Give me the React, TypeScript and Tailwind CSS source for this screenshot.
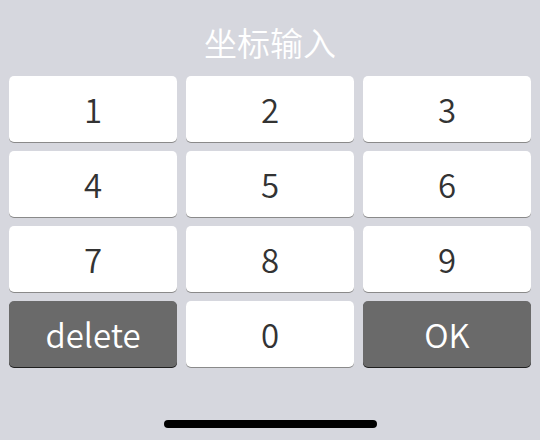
import React from 'react';

const keys = ['1', '2', '3', '4', '5', '6', '7', '8', '9', 'delete', '0', 'OK'];

const App: React.FC = () => {
  return (
    <div
      className="w-[540px] h-[440px] bg-[#d6d7de] flex flex-col items-center"
      style={{ fontFamily: '"Noto Sans CJK SC", "Noto Sans", sans-serif' }}
    >
      {/* Title */}
      <div className="h-[76px] pt-[22px] text-[33px] leading-[40px] font-[350] text-white">坐标输入</div>

      {/* Keypad */}
      <div className="grid grid-cols-3 gap-[9px] w-[522px]">
        {keys.map((k) => {
          const dark = k === 'delete' || k === 'OK';
          return (
            <button
              key={k}
              className={
                dark
                  ? 'h-[66px] pt-[2px] rounded-[5px] bg-[#6a6a6a] text-white text-[33px] font-[350] shadow-[0_1px_0_#1f1f1f] flex items-center justify-center'
                  : 'h-[66px] pt-[2px] rounded-[5px] bg-white text-[#333333] text-[33px] font-[350] shadow-[0_1px_0_#8a8a8a] flex items-center justify-center'
              }
            >
              {k}
            </button>
          );
        })}
      </div>

      {/* Home indicator */}
      <div className="mt-[53px] w-[213px] h-[8px] rounded-full bg-black" />
    </div>
  );
};

export default App;
